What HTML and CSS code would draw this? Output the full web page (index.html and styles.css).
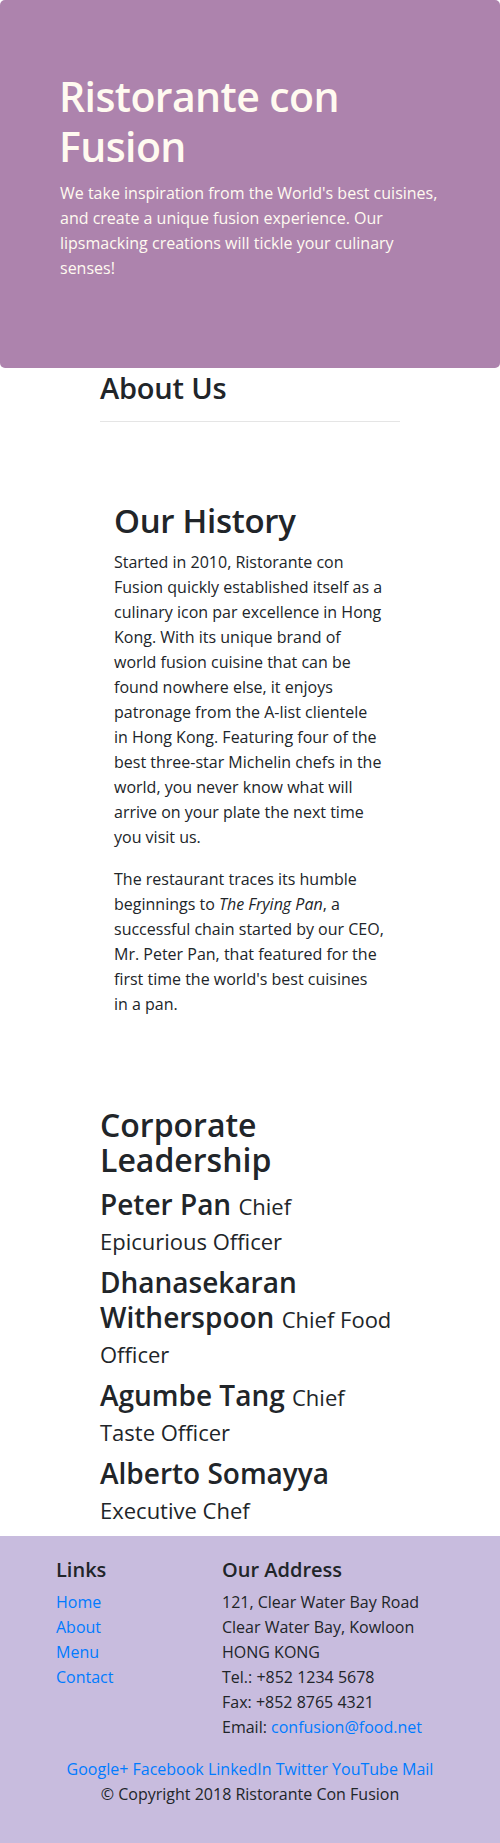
FILE: index.html
```html
<!DOCTYPE html>
<html lang="en">
<head>
<meta charset="utf-8">
<title>Ristorante con Fusion - About Us</title>
<link rel="stylesheet" href="styles.css">
</head>
<body>
<header class="jumbotron">
  <h1 class="jumbo-title">Ristorante con Fusion</h1>
  <p class="lead">We take inspiration from the World's best cuisines, and create a unique fusion experience. Our lipsmacking creations will tickle your culinary senses!</p>
</header>

<main class="content">
  <section class="about-head">
    <h3 class="page-title">About Us</h3>
    <hr class="rule">
  </section>

  <section class="history">
    <h2 class="history-title">Our History</h2>
    <p class="para">Started in 2010, Ristorante con Fusion quickly established itself as a culinary icon par excellence in Hong Kong. With its unique brand of world fusion cuisine that can be found nowhere else, it enjoys patronage from the A-list clientele in Hong Kong. Featuring four of the best three-star Michelin chefs in the world, you never know what will arrive on your plate the next time you visit us.</p>
    <p class="para">The restaurant traces its humble beginnings to <em>The Frying Pan</em>, a successful chain started by our CEO, Mr. Peter Pan, that featured for the first time the world's best cuisines in a pan.</p>
  </section>

  <section class="leaders">
    <h2 class="leaders-title">Corporate Leadership</h2>
    <ul class="leader-list">
      <li class="leader"><h3 class="leader-name">Peter Pan <small class="leader-role">Chief Epicurious Officer</small></h3></li>
      <li class="leader"><h3 class="leader-name">Dhanasekaran Witherspoon <small class="leader-role">Chief Food Officer</small></h3></li>
      <li class="leader"><h3 class="leader-name">Agumbe Tang <small class="leader-role">Chief Taste Officer</small></h3></li>
      <li class="leader"><h3 class="leader-name">Alberto Somayya <small class="leader-role">Executive Chef</small></h3></li>
    </ul>
  </section>
</main>

<footer class="footer">
  <div class="footer-cols">
    <div class="footer-links">
      <h5 class="footer-head">Links</h5>
      <ul class="link-list">
        <li><a href="#">Home</a></li>
        <li><a href="#">About</a></li>
        <li><a href="#">Menu</a></li>
        <li><a href="#">Contact</a></li>
      </ul>
    </div>
    <div class="footer-address">
      <h5 class="footer-head">Our Address</h5>
      <address class="address">
        121, Clear Water Bay Road<br>
        Clear Water Bay, Kowloon<br>
        HONG KONG<br>
        Tel.: +852 1234 5678<br>
        Fax: +852 8765 4321<br>
        Email: <a href="#">confusion@food.net</a>
      </address>
    </div>
  </div>
  <div class="social">
    <a href="#">Google+</a> <a href="#">Facebook</a> <a href="#">LinkedIn</a> <a href="#">Twitter</a> <a href="#">YouTube</a> <a href="#">Mail</a>
  </div>
  <p class="copyright">© Copyright 2018 Ristorante Con Fusion</p>
</footer>
</body>
</html>
```
FILE: styles.css
```css
* { box-sizing: border-box; }

body {
  margin: 0;
  font-family: "Open Sans", "Liberation Sans", sans-serif;
  font-size: 16px;
  line-height: 25px;
  color: #212529;
  background: #fff;
}

a { color: #007bff; text-decoration: none; }

/* ---------- Jumbotron ---------- */
.jumbotron {
  background: #ad83ad;
  color: #fffaf0;
  border-radius: 5px;
  padding: 71px 54px 87px 60px;
}
.jumbo-title {
  margin: 0 0 10px -1px;
  font-size: 41px;
  line-height: 50px;
  font-weight: 600;
  letter-spacing: -0.6px;
}
.lead {
  margin: 0;
  font-size: 16px;
  line-height: 25px;
  font-weight: 400;
}

/* ---------- Main content ---------- */
.content {
  width: 300px;
  margin-left: 100px;
  padding-top: 2px;
}
.page-title {
  margin: 0 0 16px;
  font-size: 29px;
  line-height: 35px;
  font-weight: 600;
  letter-spacing: -0.2px;
}
.rule {
  margin: 0;
  border: 0;
  border-top: 1px solid #e5e5e5;
}

.history {
  margin-top: 79px;
  padding: 0 16px 0 14px;
}
.history-title {
  margin: 0 0 9px;
  font-size: 33px;
  line-height: 40px;
  font-weight: 600;
  letter-spacing: -0.3px;
}
.para {
  margin: 0 0 17px;
}
.para:last-child { margin-bottom: 0; }

.leaders {
  margin-top: 90px;
  padding-bottom: 2px;
}
.leaders-title {
  margin: 0 0 10px;
  font-size: 32px;
  line-height: 35px;
  font-weight: 600;
}
.leader-list {
  list-style: none;
  margin: 0;
  padding: 0;
}
.leader-name {
  margin: 0 0 8px;
  font-size: 28px;
  line-height: 35px;
  font-weight: 600;
}
.leader-role {
  font-size: 22px;
  line-height: 1;
  font-weight: 400;
}

/* ---------- Footer ---------- */
.footer {
  background: #c8bcde;
  padding: 21px 0 36px;
}
.footer-cols {
  display: grid;
  grid-template-columns: 166px 1fr;
  padding-left: 56px;
  margin-bottom: 17px;
}
.footer-head {
  margin: 0 0 8px;
  font-size: 20px;
  line-height: 25px;
  font-weight: 600;
}
.link-list {
  list-style: none;
  margin: 0;
  padding: 0;
}
.address {
  font-style: normal;
  margin: 0;
}
.social {
  text-align: center;
}
.copyright {
  margin: 0;
  text-align: center;
}
```
